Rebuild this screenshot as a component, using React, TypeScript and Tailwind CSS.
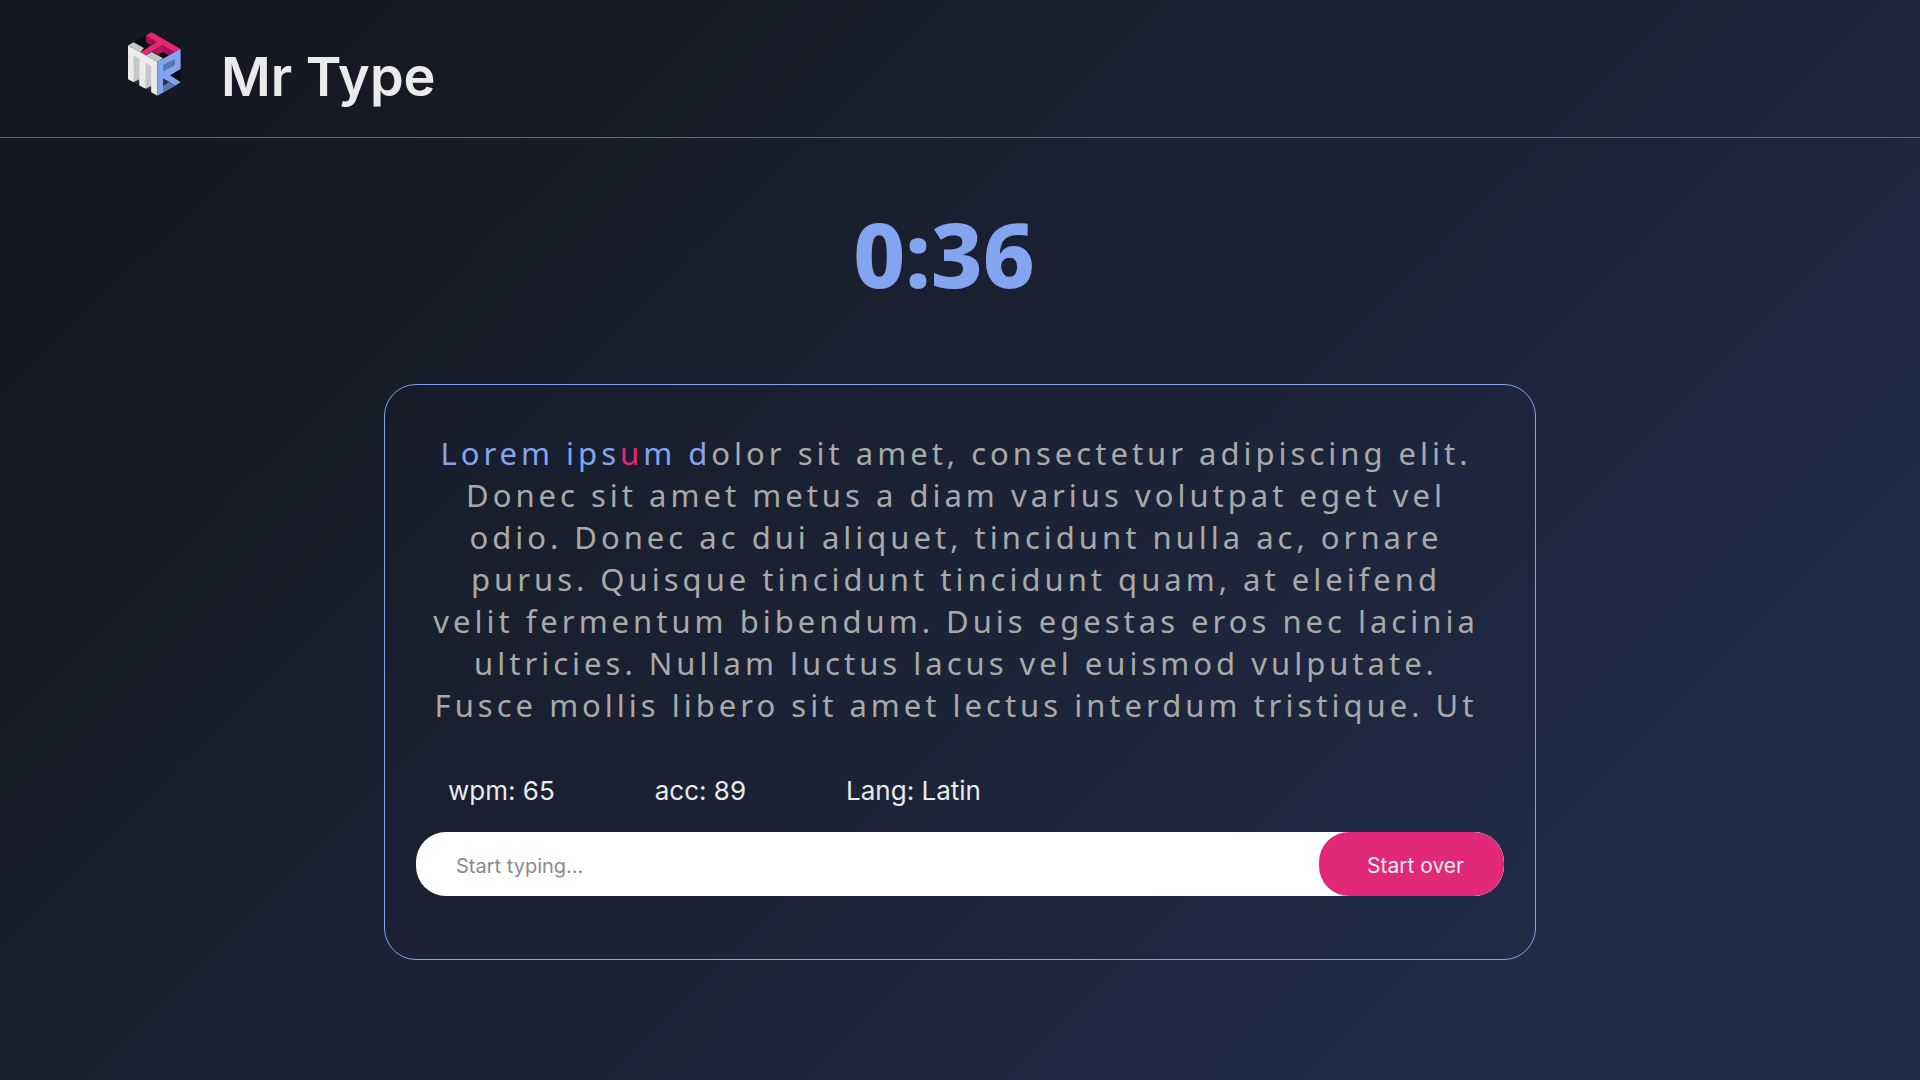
import { useState } from "react";

function Logo() {
  return (
    <svg viewBox="54 36 160 192" className="h-16 w-[53px] shrink-0" role="img" aria-label="Mr Type logo">
      <path d="M54 76L108 45L213 87V187L143 228L54 180Z" fill="#0c0d11" />
      <path d="M54 76L71 66L102 84L91 97L107 107L126 96L160 115L143 125Z" fill="#c6c6c6" />
      <path d="M108 46L140 64L122 74L108 66Z" fill="#a80d56" />
      <path d="M158 75L196 97L178 106L160 95L146 104L128 94Z" fill="#b5185f" />
      <path d="M158 75L196 97L178 106L160 95Z" fill="#a80d56" />
      <path d="M125 36L213 87L196 97L158 75L107 106L91 97L140 65L108 46Z" fill="#e22878" />
      <path d="M67 100L90 112V184L70 186Z M104 122L127 134V210L106 207Z" fill="#c6c6c6" />
      <path d="M71 187L88 178V197Z M107 207L126 198V217Z" fill="#2c2d47" />
      <path d="M54 76L143 125V228L124 217V138L107 128V207L88 197V117L71 107V187L54 178Z" fill="#ebebeb" />
      <path d="M158 130L198 110V138L158 158Z" fill="#5877ae" />
      <path d="M158 172L180 186L158 200Z" fill="#2c2d47" />
      <path d="M158 220V199L178 186L198 197Z" fill="#5877ae" />
      <path
        fillRule="evenodd"
        d="M143 125L213 87V147L181 166L213 187L197 197L160 175V218L143 228Z M160 135V155L196 136V116Z"
        fill="#83a5f0"
      />
    </svg>
  );
}

const TYPED = [
  { text: "Lorem ips", className: "text-[#83a5f0]" },
  { text: "u", className: "text-[#e22878]" },
  { text: "m d", className: "text-[#83a5f0]" },
];

const REST =
  "olor sit amet, consectetur adipiscing elit. Donec sit amet metus a diam varius volutpat eget vel odio. Donec ac dui aliquet, tincidunt nulla ac, ornare purus. Quisque tincidunt tincidunt quam, at eleifend velit fermentum bibendum. Duis egestas eros nec lacinia ultricies. Nullam luctus lacus vel euismod vulputate. Fusce mollis libero sit amet lectus interdum tristique. Ut";

export default function App() {
  const [entry, setEntry] = useState("");

  return (
    <div className="min-h-screen bg-linear-135 from-[#14161d] via-[#1b2235] via-50% to-[#1f2a44] to-80% font-[Inter,sans-serif] text-[#ebebeb]">
      <header className="flex items-start gap-10 border-b border-[#e22878] px-32 pt-8 pb-6">
        <Logo />
        <h1 className="pt-2 text-[54px] leading-[73px] font-semibold">Mr Type</h1>
      </header>
      <main className="px-[20%] pt-[62px]">
        <p className="pr-8 text-center font-['Noto_Sans',sans-serif] text-[90px] leading-[106px] font-extrabold text-[#83a5f0]">
          0:36
        </p>
        <section className="mt-[78px] rounded-4xl border border-[#83a5f0] px-[31px] pt-[47px] pb-[63px]">
          <p className="pr-5 pl-3 text-center font-['Noto_Sans',sans-serif] text-[31px] leading-[42px] tracking-[4px] text-[#a9a9a9]">
            {TYPED.map((part) => (
              <span key={part.text} className={part.className}>
                {part.text}
              </span>
            ))}
            {REST}
          </p>
          <div className="flex gap-25 px-8 pt-[46px] pb-[23px] text-[26px] leading-[37px]">
            <span>wpm: 65</span>
            <span>acc: 89</span>
            <span>Lang: Latin</span>
          </div>
          <form className="flex overflow-hidden rounded-[30px] bg-white" onSubmit={(e) => e.preventDefault()}>
            <input
              type="text"
              aria-label="Typing box"
              placeholder="Start typing..."
              value={entry}
              onChange={(e) => setEntry(e.target.value)}
              className="h-16 min-w-0 flex-1 px-10 pt-1 text-xl text-gray-800 outline-none placeholder:text-[#8a8a8a]"
            />
            <button
              type="button"
              onClick={() => setEntry("")}
              className="h-16 rounded-[30px] bg-[#e22878] pt-1 pr-10 pl-12 text-[21px]"
            >
              Start over
            </button>
          </form>
        </section>
      </main>
    </div>
  );
}
